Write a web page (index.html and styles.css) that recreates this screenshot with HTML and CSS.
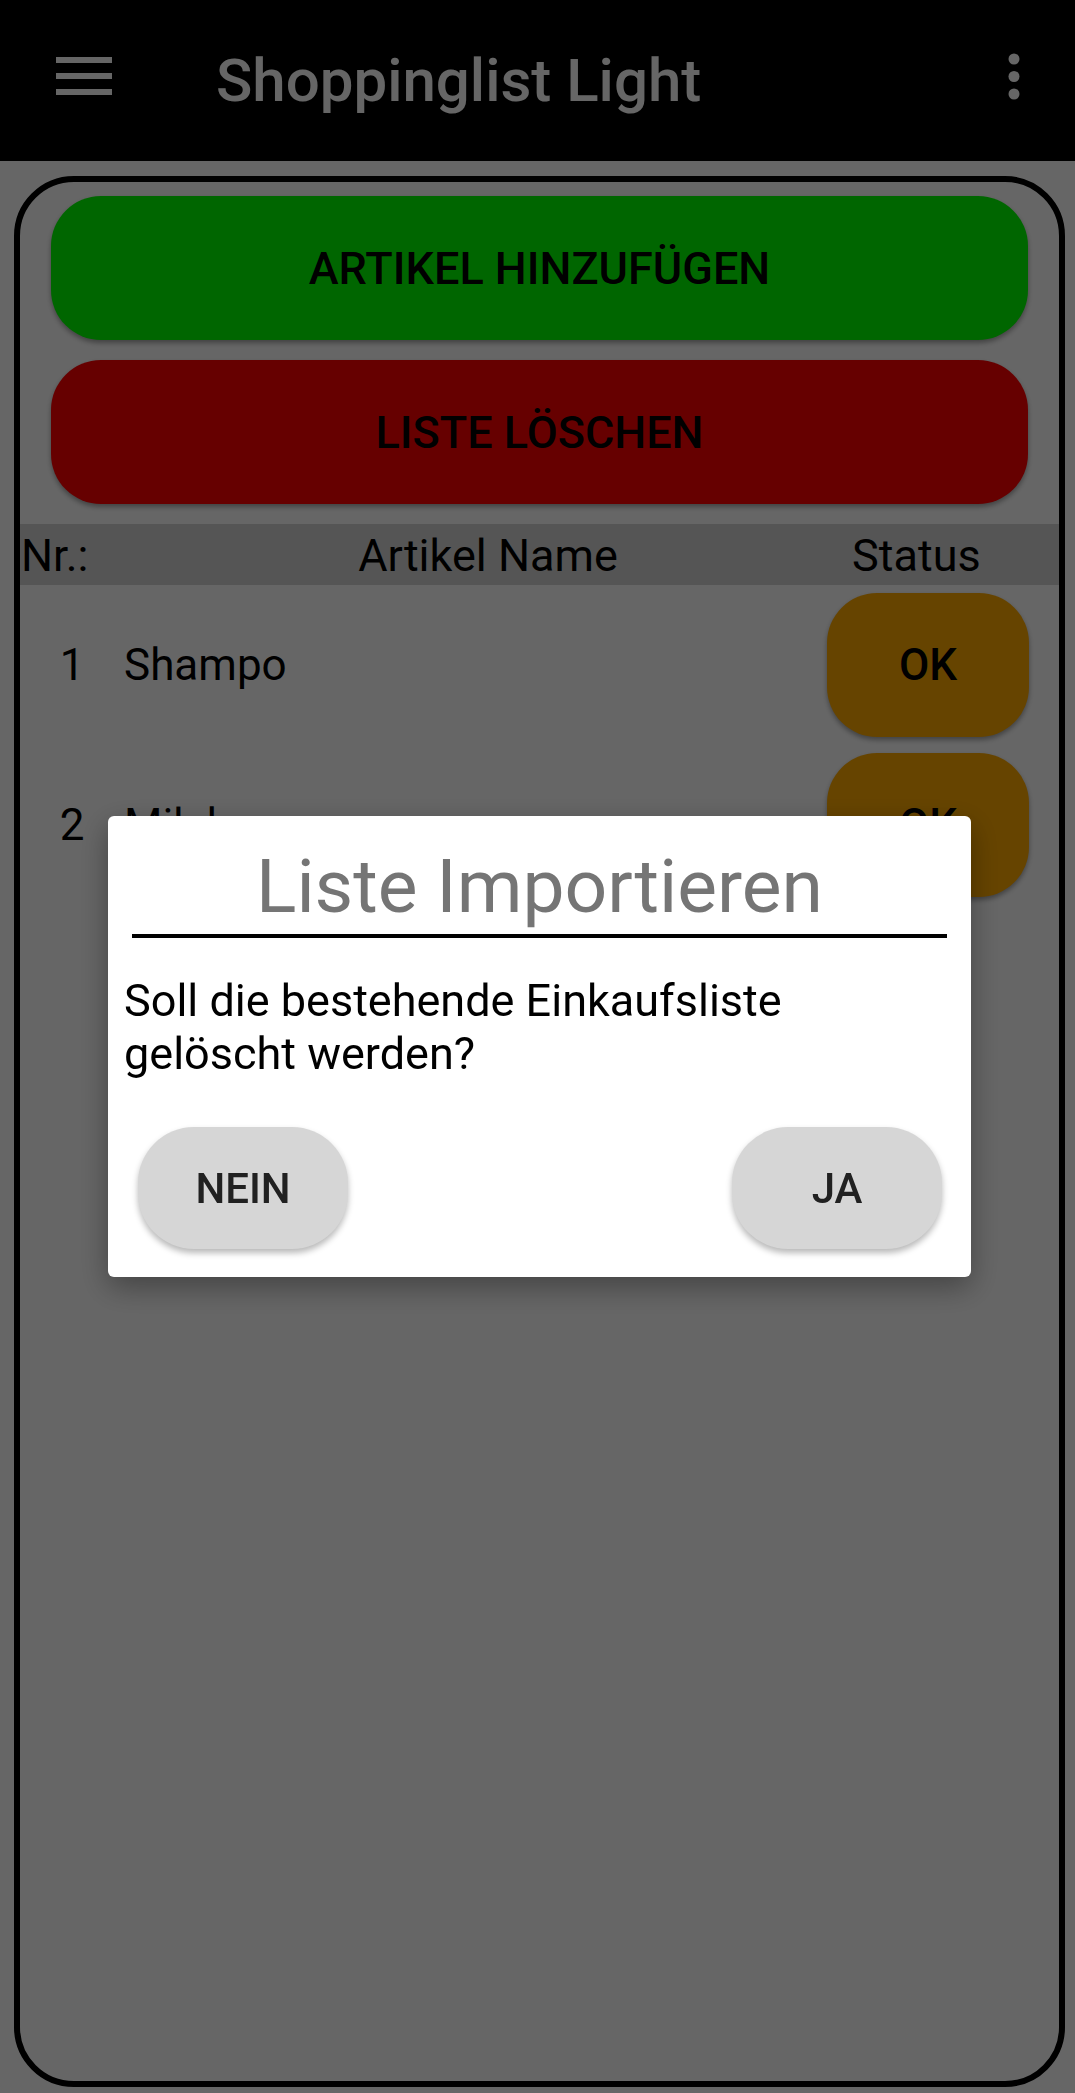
FILE: index.html
```html
<!DOCTYPE html>
<html lang="de">
<head>
<meta charset="utf-8">
<title>Shoppinglist Light</title>
<link rel="stylesheet" href="styles.css">
</head>
<body>
<header class="toolbar">
  <svg class="menu-icon" width="56" height="38" viewBox="0 0 56 38" aria-hidden="true">
    <rect x="0" y="0" width="56" height="6"/>
    <rect x="0" y="16" width="56" height="6"/>
    <rect x="0" y="32" width="56" height="6"/>
  </svg>
  <h1 class="app-title">Shoppinglist Light</h1>
  <svg class="more-icon" width="12" height="48" viewBox="0 0 12 48" aria-hidden="true">
    <circle cx="6" cy="6" r="5.5"/>
    <circle cx="6" cy="23.5" r="5.5"/>
    <circle cx="6" cy="41" r="5.5"/>
  </svg>
</header>
<main class="content">
  <section class="panel">
    <div class="actions">
      <button class="btn-action btn-add">ARTIKEL HINZUFÜGEN</button>
      <button class="btn-action btn-clear">LISTE LÖSCHEN</button>
    </div>
    <div class="list-header">
      <span class="col-nr">Nr.:</span>
      <span class="col-name">Artikel Name</span>
      <span class="col-status">Status</span>
    </div>
    <ul class="items">
      <li class="item">
        <span class="item-nr">1</span>
        <span class="item-name">Shampo</span>
        <button class="btn-ok">OK</button>
      </li>
      <li class="item">
        <span class="item-nr">2</span>
        <span class="item-name">Milch</span>
        <button class="btn-ok">OK</button>
      </li>
    </ul>
  </section>
</main>
<div class="scrim">
  <div class="dialog">
    <h2 class="dialog-title">Liste Importieren</h2>
    <p class="dialog-message">Soll die bestehende Einkaufsliste gelöscht werden?</p>
    <div class="dialog-actions">
      <button class="btn-dialog">NEIN</button>
      <button class="btn-dialog">JA</button>
    </div>
  </div>
</div>
</body>
</html>
```
FILE: styles.css
```css
* {
  box-sizing: border-box;
}

html, body {
  margin: 0;
  padding: 0;
}

body {
  height: 100vh;
  display: flex;
  flex-direction: column;
  background: #ffffff;
  font-family: Roboto, "Noto Sans", "Liberation Sans", sans-serif;
  color: #000;
}

button {
  font-family: inherit;
  border: none;
  cursor: pointer;
}

/* Toolbar */
.toolbar {
  height: 161px;
  flex: 0 0 161px;
  background: #000;
  display: flex;
  align-items: flex-start;
}

.menu-icon {
  margin: 57px 0 0 56px;
  fill: #ffffff;
  flex: 0 0 auto;
}

.app-title {
  margin: 0 0 0 104px;
  font-size: 60px;
  line-height: 161px;
  font-weight: 500;
  color: #ffffff;
}

.more-icon {
  margin: 53px 55px 0 auto;
  fill: #ffffff;
  flex: 0 0 auto;
}

/* Content */
.content {
  flex: 1;
  display: flex;
  flex-direction: column;
  padding: 15px 10px 6px 14px;
}

.panel {
  flex: 1;
  border: 6px solid #000;
  border-radius: 60px;
  overflow: hidden;
}

.actions {
  display: flex;
  flex-direction: column;
  gap: 20px;
  padding: 14px 31px 0 31px;
}

.btn-action {
  height: 144px;
  border-radius: 50px;
  font-size: 45px;
  font-weight: 500;
  color: #000;
  box-shadow: 0 3px 5px rgba(0, 0, 0, 0.35);
}

.btn-add {
  background: #00ff00;
}

.btn-clear {
  background: #ff0000;
}

.list-header {
  margin-top: 20px;
  height: 61px;
  padding-top: 2px;
  background: #d5d5d5;
  display: grid;
  grid-template-columns: 104px 1fr 207px;
  font-size: 45px;
  line-height: 59px;
}

.col-nr {
  padding-left: 1px;
}

.col-name {
  text-align: center;
}

.col-status {
  text-align: left;
}

.items {
  list-style: none;
  margin: 0;
  padding: 8px 0 0;
  display: flex;
  flex-direction: column;
  gap: 16px;
}

.item {
  display: flex;
  align-items: center;
  height: 144px;
  font-size: 44px;
}

.item-nr {
  width: 104px;
  text-align: center;
}

.item-name {
  flex: 1;
}

.btn-ok {
  width: 202px;
  height: 144px;
  margin-right: 30px;
  border-radius: 50px;
  background: #ffaa00;
  font-size: 44px;
  font-weight: 500;
  color: #000;
  box-shadow: 0 3px 5px rgba(0, 0, 0, 0.35);
}

/* Dialog overlay */
.scrim {
  position: fixed;
  inset: 0;
  background: rgba(0, 0, 0, 0.6);
  display: flex;
  align-items: center;
  justify-content: center;
  padding-left: 4px;
}

.dialog {
  width: 863px;
  background: #ffffff;
  border-radius: 6px;
  padding: 26px 0 28px;
  box-shadow: 0 10px 30px rgba(0, 0, 0, 0.35);
}

.dialog-title {
  margin: 0 24px;
  padding-bottom: 3px;
  border-bottom: 4px solid #000;
  text-align: center;
  font-size: 75px;
  line-height: 89px;
  font-weight: 400;
  color: #757575;
}

.dialog-message {
  margin: 36px 16px 0;
  font-size: 45px;
  line-height: 53px;
  color: #000;
}

.dialog-actions {
  margin-top: 47px;
  padding: 0 29px 0 30px;
  display: flex;
  justify-content: space-between;
}

.btn-dialog {
  width: 210px;
  height: 122px;
  border-radius: 56px;
  background: #d6d6d6;
  font-size: 42px;
  font-weight: 500;
  color: #212121;
  box-shadow: 0 4px 6px rgba(0, 0, 0, 0.28);
}
```
